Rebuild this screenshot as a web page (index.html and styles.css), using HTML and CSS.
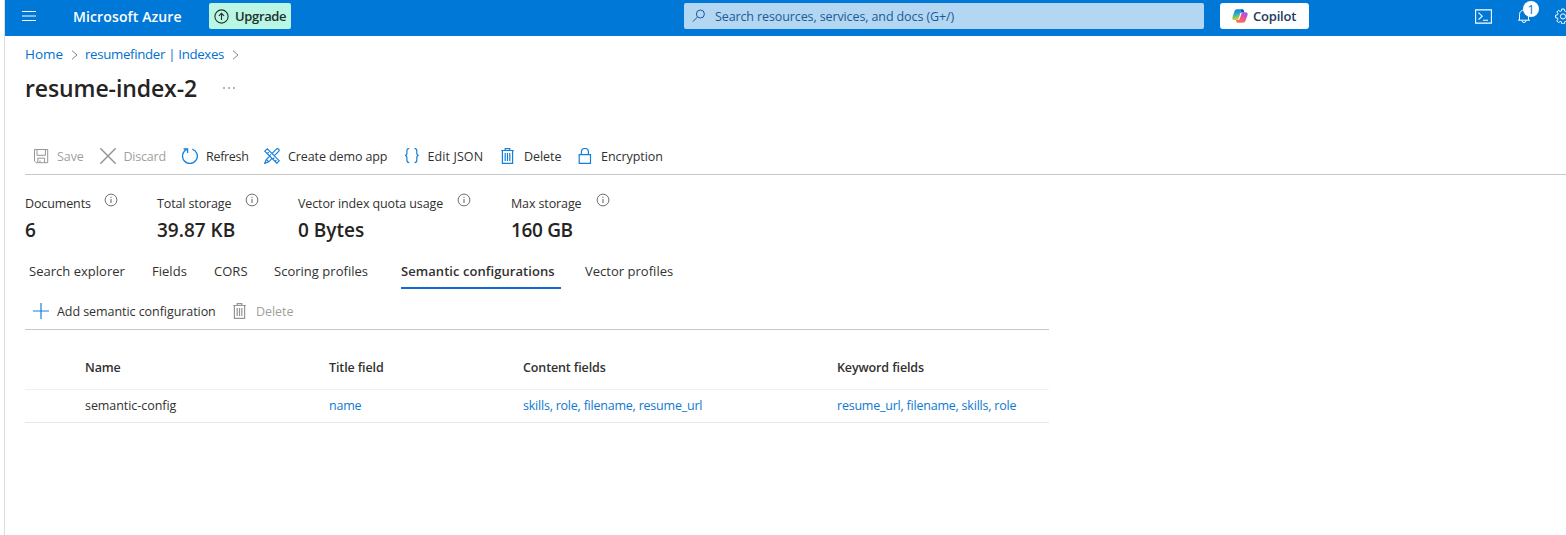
FILE: index.html
```html
<!DOCTYPE html>
<html lang="en">
<head>
<meta charset="utf-8">
<title>resume-index-2 - Microsoft Azure</title>
<link rel="stylesheet" href="styles.css">
</head>
<body>
<svg class="defs" width="0" height="0" aria-hidden="true">
  <symbol id="info" viewBox="0 0 14 14"><circle cx="7" cy="7" r="5.9" fill="none" stroke="currentColor" stroke-width=".9"/><path d="M7 6v4M7 3.800v1.100" stroke="currentColor" stroke-width="1"/></symbol>
  <symbol id="trash" viewBox="0 0 16 16"><path d="M1.200 2.500h12.600M5.200 2.400V.6h4.600v1.800M2.400 2.700v12.700h10.200V2.700M5.200 5v8M7.500 5v8M9.800 5v8" fill="none" stroke="currentColor" stroke-width="1.200"/></symbol>
</svg>
<div class="portal">
  <header class="topbar">
    <svg class="menu" viewBox="0 0 14 12"><path d="M0 1.500h14M0 6h14M0 10.500h14" stroke="#fff"/></svg>
    <span class="brand">Microsoft Azure</span>
    <button class="upgrade">
      <svg viewBox="0 0 15 15"><circle cx="7.500" cy="7.500" r="6.600"/><path d="M7.500 11V4.300M4.900 6.900l2.600-2.600 2.600 2.600"/></svg>
      <span>Upgrade</span>
    </button>
    <div class="search">
      <svg viewBox="0 0 14 14"><circle cx="8.400" cy="5" r="4" /><path d="M5.500 8L.8 12.600"/></svg>
      <span>Search resources, services, and docs (G+/)</span>
    </div>
    <button class="copilot">
      <svg viewBox="0 0 16 16">
        <defs>
          <linearGradient id="cpBlue" x1="0" y1="0" x2=".3" y2="1"><stop offset="0" stop-color="#1b68d8"/><stop offset=".45" stop-color="#20a7dc"/><stop offset=".75" stop-color="#8ac653"/><stop offset="1" stop-color="#ffc52b"/></linearGradient>
          <linearGradient id="cpPink" x1=".7" y1="0" x2=".3" y2="1"><stop offset="0" stop-color="#a258e8"/><stop offset=".5" stop-color="#ed5196"/><stop offset="1" stop-color="#ff7849"/></linearGradient>
        </defs>
        <path d="M5.300 1.200h4.800c1 0 1.400.6 1.700 1.500l.5 1.600H10c-1 0-1.500.5-1.800 1.400L6.700 10.400c-.4 1.200-.9 1.700-2 1.700H2.300C.7 12.100 0 10.900.5 9.200L2.400 3.400C2.900 1.900 3.800 1.200 5.300 1.200z" fill="url(#cpBlue)"/>
        <path d="M10.700 14.800H5.900c-1 0-1.400-.6-1.700-1.500l-.5-1.200H6c1 0 1.500-.5 1.800-1.400l1.500-4.700c.4-1.200.9-1.700 2-1.700h2.400c1.600 0 2.300 1.200 1.800 2.900l-1.900 5.400c-.5 1.500-1.400 2.200-2.900 2.200z" fill="url(#cpPink)"/>
        <path d="M9.500 1.200c1.400 0 2 .5 2.300 1.500l.5 1.600H10c-.6 0-1 .2-1.300.5z" fill="#1c4fb8"/>
      </svg>
      <span>Copilot</span>
    </button>
    <svg class="shell" viewBox="0 0 17 15"><path d="M.6.9h15.800v13.200H.6zM3.500 3.700L7.200 7.200l-3.700 3.500M8 11.300h5"/></svg>
    <div class="bell">
      <svg viewBox="0 0 14 16"><path d="M1 12.200h12M2.500 12V6.500a4.500 4.500 0 0 1 9 0V12M5 12.500a2 2 0 0 0 4 0"/></svg>
      <span class="badge">1</span>
    </div>
    <svg class="gear" viewBox="0 0 16 16"><path d="M6.800 1h2.400l.4 2 1.200.5 1.700-1.200 1.700 1.700-1.200 1.700.5 1.200 2 .3v2.400l-2 .4-.5 1.200 1.200 1.700-1.700 1.700-1.700-1.200-1.200.5-.4 2H6.800l-.4-2-1.200-.5-1.700 1.200-1.700-1.700L3 11.200 2.500 10l-2-.4V7.200l2-.3L3 5.700 1.800 4l1.700-1.700 1.700 1.200L6.400 3z"/><circle cx="8" cy="8.400" r="2.600"/></svg>
  </header>

  <main class="page">
    <nav class="crumbs">
      <a class="home">Home</a>
      <svg viewBox="0 0 8 10"><path d="M1 .7l5 4.300-5 4.300"/></svg>
      <a class="parent">resumefinder | Indexes</a>
      <svg viewBox="0 0 8 10"><path d="M1 .7l5 4.300-5 4.300"/></svg>
    </nav>
    <div class="heading"><h1>resume-index-2</h1><svg class="dots" viewBox="0 0 12 2"><circle cx="1" cy="1" r=".8"/><circle cx="6" cy="1" r=".8"/><circle cx="11" cy="1" r=".8"/></svg></div>

    <div class="commands main-commands">
      <div class="cmd c-save off"><svg viewBox="0 0 16 16"><path d="M1.500 1.500h13.200v13.200H3.200L1.500 13zM4 1.500v5.800h8.400V1.500M4.800 14.500v-4.300h6.800v4.300M7 14.500v-2"/></svg><span>Save</span></div>
      <div class="cmd c-discard off"><svg viewBox="0 0 16 16"><path stroke-width="1.500" d="M.3.3l15.400 15.400M15.700.3L.3 15.700"/></svg><span>Discard</span></div>
      <div class="cmd c-refresh"><svg viewBox="0 0 16 16"><path stroke-width="1.300" d="M10.300 1.100A7.400 7.400 0 1 1 4.600 1.500M1.600 1h4v4"/></svg><span>Refresh</span></div>
      <div class="cmd c-demo"><svg viewBox="0 0 16 16"><path stroke-width="1.150" d="M.8 3.200L3.300.8l11.900 11.900-2.400 2.400zM3.500 5.500l1.300-1.300M5.700 7.700L7 6.400M9 11l1.300-1.300M11.200 13.200l1.200-1.200M10.300 7.700l4.400-4.300c1.400-1.500-.9-3.700-2.300-2.300L8.200 5.400M5.800 8L2.300 11.500.7 15.400l4.100-1.600L8.400 10.200M2.300 11.500l2.500 2.300"/></svg><span>Create demo app</span></div>
      <div class="cmd c-json"><svg viewBox="0 0 16 16"><path stroke-width="1.200" d="M5.200.4C3.300.4 2.900 1 2.900 2.700v2.600C2.900 6.800 2.300 7.500.9 7.500c1.400 0 2 .7 2 2.200v2.600c0 1.700.4 2.300 2.300 2.300M10.500.4c1.900 0 2.300.6 2.300 2.300v2.600c0 1.500.6 2.200 2 2.200-1.400 0-2 .7-2 2.200v2.600c0 1.700-.4 2.300-2.300 2.300"/></svg><span>Edit JSON</span></div>
      <div class="cmd c-delete"><svg><use href="#trash"/></svg><span>Delete</span></div>
      <div class="cmd c-lock"><svg viewBox="0 0 16 16"><path stroke-width="1.200" d="M2.200 6.600h11.300v8.700H2.200zM4.400 6.600V4a3.500 3.500 0 0 1 7 0v2.600"/></svg><span>Encryption</span></div>
    </div>

    <section class="stats">
      <div class="stat"><div class="label"><span class="s1">Documents</span><svg><use href="#info"/></svg></div><strong>6</strong></div>
      <div class="stat"><div class="label"><span class="s2">Total storage</span><svg><use href="#info"/></svg></div><strong>39.87 KB</strong></div>
      <div class="stat"><div class="label"><span class="s3">Vector index quota usage</span><svg><use href="#info"/></svg></div><strong>0 Bytes</strong></div>
      <div class="stat"><div class="label"><span class="s4">Max storage</span><svg><use href="#info"/></svg></div><strong class="tight">160 GB</strong></div>
    </section>

    <nav class="tabs">
      <a><span>Search explorer</span></a><a><span>Fields</span></a><a><span>CORS</span></a><a><span>Scoring profiles</span></a><a class="active"><span>Semantic configurations</span></a><a><span>Vector profiles</span></a>
    </nav>

    <section class="panel">
      <div class="commands sub-commands">
        <div class="cmd c-add"><svg viewBox="0 0 16 16"><path stroke-width="1.200" d="M8 0v16M0 8h16"/></svg><span>Add semantic configuration</span></div>
        <div class="cmd c-delete off"><svg><use href="#trash"/></svg><span>Delete</span></div>
      </div>
      <div class="row head"><span>Name</span><span>Title field</span><span>Content fields</span><span>Keyword fields</span></div>
      <div class="row"><span>semantic-config</span><a>name</a><a>skills, role, filename, resume_url</a><a>resume_url, filename, skills, role</a></div>
    </section>
  </main>
</div>
</body>
</html>
```

FILE: styles.css
```css
* { box-sizing: border-box; }
body {
  margin: 0;
  height: 535px;
  overflow: hidden;
  background: #fff;
  color: #323130;
  font: 12.500px/18px "Open Sans", "Noto Sans", sans-serif;
  letter-spacing: -.06px;
}
.defs { display: block; height: 0; }
.portal { margin-left: 4px; height: 535px; border-left: 1px solid #dcdde6; overflow: hidden; }
svg { flex: none; fill: none; stroke: currentColor; }
span, a { white-space: nowrap; }
button { border: 0; padding: 0; font: inherit; }

/* Top bar */
.topbar { display: flex; align-items: center; width: 1575px; height: 36px; padding-bottom: 4px; background: #0078d7; color: #fff; }
.menu { width: 14px; height: 12px; margin-left: 17px; }
.brand { width: 136px; margin-left: 37px; padding-top: 2px; font-size: 14px; font-weight: 600; letter-spacing: .12px; }
.upgrade { display: flex; align-items: center; gap: 6px; width: 82px; height: 26px; padding-left: 5px; background: #b9f6e3; color: #20302d; border-radius: 2px; font-size: 13px; font-weight: 600; letter-spacing: -.35px; }
.upgrade svg { width: 15px; height: 15px; stroke-width: 1.100; }
.search { display: flex; align-items: center; gap: 9px; width: 520px; height: 26px; margin-left: 393px; padding-left: 8px; background: #b3d6f2; color: #1a5a96; border-radius: 2px; letter-spacing: -.11px; }
.search span { padding-top: 2px; }
.search svg { width: 14px; height: 14px; }
.copilot { display: flex; align-items: center; gap: 5px; width: 89px; height: 26px; margin-left: 16px; padding-left: 12px; background: #fff; color: #243a5e; border-radius: 3px; font-size: 13px; font-weight: 600; letter-spacing: -.2px; }
.copilot svg { width: 16px; height: 16px; stroke: none; }
.shell { width: 17px; height: 15px; margin-left: 166px; stroke-width: 1.100; }
.bell { position: relative; width: 14px; height: 16px; margin-left: 25px; }
.bell svg { display: block; width: 14px; height: 16px; }
.badge { position: absolute; left: 6px; top: -7px; width: 16px; height: 16px; border-radius: 50%; background: #fff; color: #0078d7; font-size: 13px; line-height: 17px; text-align: center; }
.gear { width: 16px; height: 16px; margin-left: 24px; }

/* Title area */
.page { padding-left: 20px; }
.crumbs { display: flex; align-items: center; height: 18px; margin-top: 10px; color: #0071cf; font-size: 13.500px; }
.crumbs a { margin-top: -2px; }
.crumbs .home { width: 46px; }
.crumbs .parent { width: 147px; font-size: 13.250px; letter-spacing: -.32px; }
.crumbs svg { width: 8px; height: 10px; stroke: #85888c; margin-right: 6px; }
.heading { display: flex; align-items: center; height: 32px; margin-top: 8px; }
h1 { width: 198px; margin: 0; font-size: 23px; line-height: 32px; font-weight: 600; letter-spacing: -.1px; white-space: nowrap; color: #252423; }
.dots { width: 12px; height: 2px; fill: #55585c; stroke: none; }

/* Command bars */
.commands { display: flex; align-items: center; padding-left: 8px; border-bottom: 1px solid #c8c8c8; }
.main-commands { height: 37px; margin-top: 34px; }
.sub-commands { height: 37px; }
.cmd { display: flex; align-items: center; gap: 8px; height: 18px; }
.cmd span { padding-top: 2px; }
.cmd svg { width: 16px; height: 16px; color: #1580db; }
.off { color: #a19f9d; }
.off svg { color: #979593; }
.c-save { width: 66.500px; }
.c-discard { width: 82.500px; letter-spacing: -.2px; }
.c-refresh { width: 82px; letter-spacing: -.3px; }
.c-demo { width: 139.500px; letter-spacing: -.1px; }
.c-json { width: 96.500px; letter-spacing: .1px; }
.main-commands .c-delete { width: 77px; }
.c-add { width: 199px; }

/* Statistics */
.stats { display: grid; grid-template-columns: 132px 141px 213px 120px; margin-top: 16px; height: 54px; }
.label { display: flex; height: 24px; letter-spacing: -.12px; }
.label span { line-height: 26px; }
.label svg { width: 14px; height: 14px; margin: 2px 0 0 14px; color: #605e5c; }
.s1 { width: 65px; } .s2 { width: 74px; } .s3 { width: 145px; } .s4 { width: 71px; }
.stat strong { display: block; font-size: 19px; line-height: 30px; font-weight: 600; letter-spacing: 0; color: #252423; white-space: nowrap; }
.stat .tight { letter-spacing: -.35px; }

/* Tabs */
.tabs { display: grid; grid-template-columns: 123px 62px 60px 127px 184px 100px; height: 45px; padding-left: 4px; font-size: 13px; letter-spacing: .02px; }
.tabs a { height: 45px; padding-top: 17px; }
.tabs .active { width: 160px; height: 44px; font-weight: 600; letter-spacing: .06px; border-bottom: 2px solid #0f6cd0; }

/* Semantic configurations */
.panel { width: 1024px; padding-top: 3px; }
.row { display: grid; grid-template-columns: 244px 194px 314px 1fr; align-items: center; height: 33px; padding-left: 60px; border-bottom: 1px solid #e6e6e6; }
.head { height: 60px; padding-top: 17px; font-weight: 600; letter-spacing: -.12px; border-bottom-color: #f0f0f0; }
.row a { color: #1078d0; letter-spacing: -.22px; }
```
